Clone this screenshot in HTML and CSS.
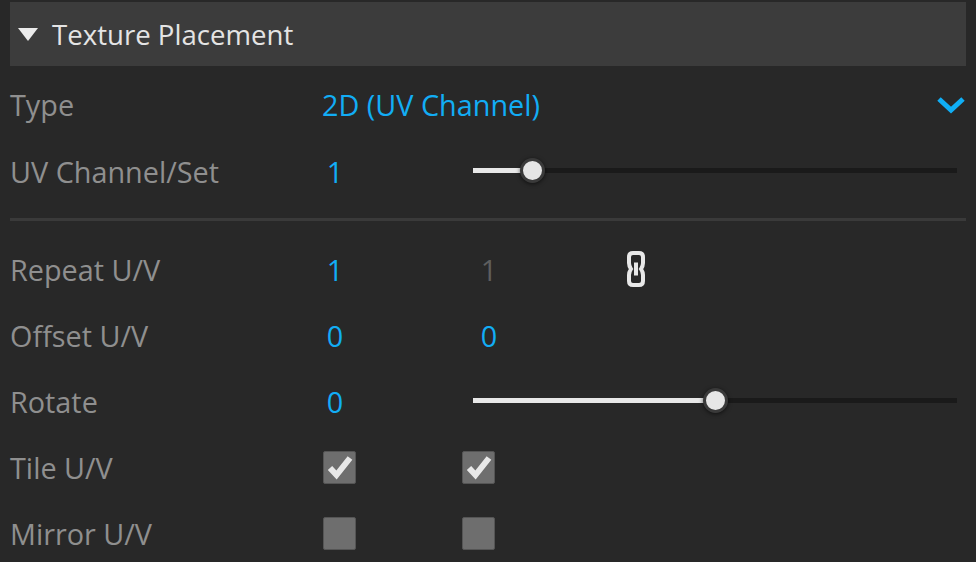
FILE: index.html
```html
<!DOCTYPE html>
<html lang="en">
<head>
<meta charset="utf-8">
<title>Texture Placement</title>
<link rel="stylesheet" href="styles.css">
</head>
<body>
<main class="panel">
  <header class="head">
    <svg class="caret" width="20" height="13" viewBox="0 0 20 13"><path d="M0 0H20L10 13Z"/></svg>
    <span>Texture Placement</span>
  </header>
  <div class="row r-type">
    <span class="label">Type</span>
    <span class="val-wide">2D (UV Channel)</span>
    <svg class="chev" width="28" height="18" viewBox="0 0 28 18"><path d="M2 3L14 14L26 3"/></svg>
  </div>
  <div class="row r-uv">
    <span class="label">UV Channel/Set</span>
    <span class="num">1</span>
    <div class="slider"><i class="fill f-uv"></i><b class="knob"></b></div>
  </div>
  <hr class="sep">
  <div class="row r-rep">
    <span class="label">Repeat U/V</span>
    <span class="num">1</span>
    <span class="num dim">1</span>
    <svg class="link" width="18" height="36" viewBox="0 0 18 36"><path d="M6 2H12Q16 2 16 6V12Q16 15 14 18Q16 21 16 24V30Q16 34 12 34H6Q2 34 2 30V24Q2 21 4 18Q2 15 2 12V6Q2 2 6 2Z"/><path class="bar" d="M9 11.5V24.5"/></svg>
  </div>
  <div class="row r-off">
    <span class="label">Offset U/V</span>
    <span class="num">0</span>
    <span class="num">0</span>
  </div>
  <div class="row r-rot">
    <span class="label">Rotate</span>
    <span class="num">0</span>
    <div class="slider"><i class="fill f-rot"></i><b class="knob"></b></div>
  </div>
  <div class="row r-tile">
    <span class="label">Tile U/V</span>
    <span class="cell"><span class="box"><svg width="33" height="33" viewBox="0 0 33 33"><path d="M7 17L13.5 24L27 7"/></svg></span></span>
    <span class="cell"><span class="box"><svg width="33" height="33" viewBox="0 0 33 33"><path d="M7 17L13.5 24L27 7"/></svg></span></span>
  </div>
  <div class="row r-mir">
    <span class="label">Mirror U/V</span>
    <span class="cell"><span class="box"></span></span>
    <span class="cell"><span class="box"></span></span>
  </div>
</main>
</body>
</html>
```
FILE: styles.css
```css
html, body { margin: 0; padding: 0; }
body {
  width: 976px; height: 562px; overflow: hidden;
  background: #282828;
  font-family: "Open Sans", "Noto Sans", sans-serif;
}
.panel { display: flex; flex-direction: column; padding-top: 2px; }
.head {
  height: 64px; margin: 0 10px; background: #3c3c3c; color: #e4e4e4;
  display: flex; align-items: center; font-size: 27.6px; padding-left: 8px; gap: 14px;
}
.caret { fill: #ebebeb; }
.row {
  display: flex; align-items: center; box-sizing: border-box; height: 66px;
  padding: 0 0 2px 10px; font-size: 28.8px;
}
.label { width: 302px; color: #8f8f8f; }
.num { width: 46px; margin-right: 108px; text-align: center; color: #12adf5; }
.dim { color: #5e5e5e; }
.val-wide { color: #12adf5; flex: 1; margin-left: 10px; }
.chev { fill: none; stroke: #10aef5; stroke-width: 5; margin: 1px 11px 0 0; }
.r-type { height: 80px; padding-bottom: 4px; }
.r-uv { height: 52px; }
.slider { position: relative; width: 484px; height: 5px; background: #1a1a1a; margin: -2px 0 0 7px; }
.fill { position: absolute; left: 0; top: 0; height: 5px; background: #e8e8e8; }
.f-uv { width: 59px; }
.f-rot { width: 242px; }
.knob {
  position: absolute; top: -10px; width: 19px; height: 19px; margin-left: -12px;
  border: 3px solid #3a3a3a; border-radius: 50%; background: #e6e6e6;
  box-shadow: 0 1px 4px rgba(0,0,0,.6);
}
.f-uv + .knob { left: 59px; }
.f-rot + .knob { left: 242px; }
.sep { height: 3px; margin: 20px 10px 0; border: 0; background: #3a3a3a; }
.r-rep { margin-top: 16px; }
.link { margin: 0 0 0 7px; fill: none; stroke: #e8e8e8; stroke-width: 4; }
.bar { stroke-width: 4; }
.cell { width: 139px; display: flex; padding-left: 11px; box-sizing: border-box; }
.box {
  width: 33px; height: 33px; box-sizing: border-box;
  background: #6e6e6e; border: 1px solid #555; border-radius: 2px;
  display: block; overflow: hidden;
}
.box svg { display: block; margin: -1px; fill: none; stroke: #e8e8e8; stroke-width: 6; }
```
